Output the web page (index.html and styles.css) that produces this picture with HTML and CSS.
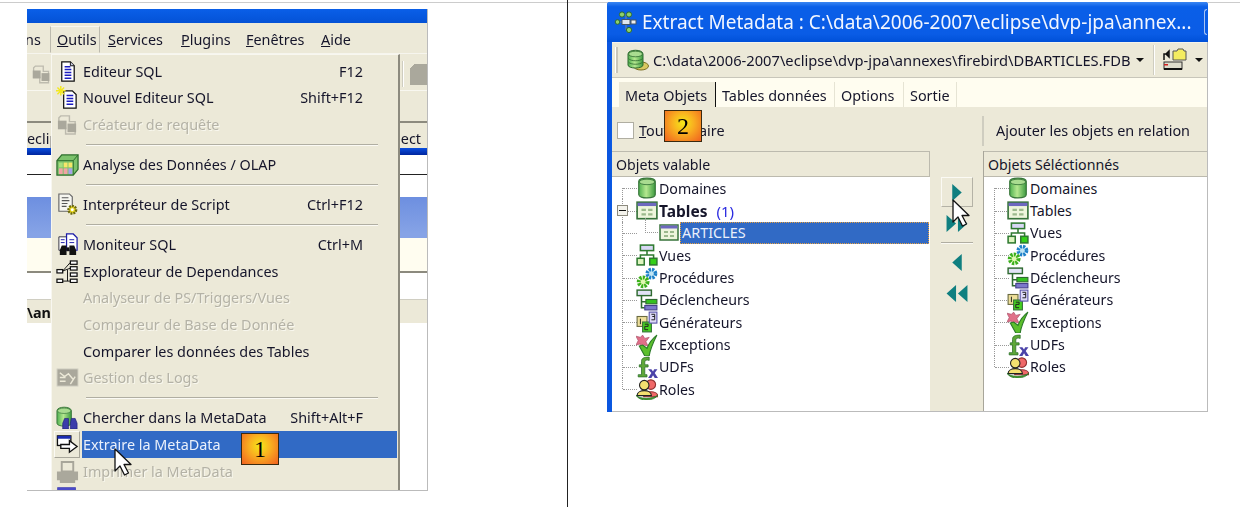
FILE: index.html
```html
<!DOCTYPE html>
<html lang="fr">
<head>
<meta charset="utf-8">
<title>Extraire la MetaData</title>
<link rel="stylesheet" href="styles.css">
</head>
<body>
<svg class="defs" aria-hidden="true">
  <defs>
    <linearGradient id="g-green" x1="0" x2="1" y1="0" y2="0"><stop offset="0" stop-color="#4fb050"/><stop offset=".45" stop-color="#b5e88f"/><stop offset="1" stop-color="#3c9a40"/></linearGradient>
    <symbol id="i-doc" viewBox="0 0 24 24"><path d="M6 2h9l4 4v16H6z" fill="#fff" stroke="#111" stroke-width="1.3"/><path d="M15 2v4h4" fill="#cfcfe8" stroke="#111"/><path d="M9 7h6M9 10h7M9 13h7M9 16h7M9 19h7" stroke="#1c1cc0" stroke-width="1.5"/></symbol>
    <symbol id="i-docnew" viewBox="0 0 24 24"><path d="M8 5h9l4 4v14H8z" fill="#fff" stroke="#111" stroke-width="1.3"/><path d="M11 10h7M11 13h7M11 16h7M11 19h7" stroke="#1c1cc0" stroke-width="1.5"/><path d="M5 0v10M0 5h10M1.500 1.500l7 7M8.500 1.500l-7 7" stroke="#f3e820" stroke-width="1.500"/></symbol>
    <symbol id="i-query" viewBox="0 0 24 24"><path d="M5 3h9v6h6v13H10v-6H3V5z" fill="#ece9d8" stroke="#bdbbae" stroke-width="1.500"/><rect x="2" y="8" width="9" height="9" fill="#aaa89c"/><rect x="12" y="11" width="9" height="9" fill="#aaa89c"/></symbol>
    <symbol id="i-olap" viewBox="0 0 24 24"><path d="M1 8l5-6h17v15l-5 6H1z" fill="#7cc26c" stroke="#2b6d2b" stroke-width="1.300"/><path d="M1 8h17v15M18 8l5-6" fill="none" stroke="#2b6d2b"/><rect x="3" y="10" width="4" height="5" fill="#a7e07f"/><rect x="8" y="10" width="4" height="5" fill="#f6e76a"/><rect x="13" y="10" width="4" height="5" fill="#f6e76a"/><rect x="3" y="16" width="4" height="6" fill="#f1a4a4"/><rect x="8" y="16" width="4" height="6" fill="#f1a4a4"/><rect x="13" y="16" width="4" height="6" fill="#a6a2e8"/></symbol>
    <symbol id="i-script" viewBox="0 0 24 24"><path d="M3 1h11l3 3v15H3z" fill="#f6f6f0" stroke="#666" stroke-width="1.200"/><path d="M6 5h7M6 8h8M6 11h6M6 14h5" stroke="#555" stroke-width="1.200"/><circle cx="17" cy="17.500" r="4" fill="#e6d420" stroke="#6c6a10" stroke-width="2.500" stroke-dasharray="2 1"/><circle cx="17" cy="17.500" r="1.500" fill="#fff"/></symbol>
    <symbol id="i-monitor" viewBox="0 0 24 24"><path d="M3 4h8v14H3z" fill="#fff" stroke="#334" /><path d="M11 1h7l4 4v13H11z" fill="#fff" stroke="#1c1ca8" stroke-width="1.300"/><path d="M5 7h4M5 10h4M14 7h5M14 10h5" stroke="#1c1ca8"/><path d="M6 13h5v10H4v-5zM14 13h5l2 5v5h-7z" fill="#111"/><rect x="11" y="15" width="3" height="4" fill="#111"/></symbol>
    <symbol id="i-deps" viewBox="0 0 24 24"><g fill="#fff" stroke="#111" stroke-width="1.300"><rect x="1" y="10" width="6" height="3.500"/><rect x="1" y="20" width="6" height="3.500"/><rect x="15" y="1" width="7" height="3.500"/><rect x="15" y="7" width="7" height="3.500"/><rect x="15" y="13.500" width="7" height="3.500"/><rect x="15" y="20" width="7" height="3.500"/></g><path d="M7 11.500l8-9M7 11.500l8-3M7 22h8M12 10v12" fill="none" stroke="#111"/></symbol>
    <symbol id="i-logs" viewBox="0 0 24 24"><rect x="1" y="3" width="22" height="18" fill="#aaa89c" stroke="#d8d6c8"/><path d="M4 7l5 4 4-3 5 6M4 12h6M4 16h6M15 19l5-8" fill="none" stroke="#ece9d8" stroke-width="1.500"/></symbol>
    <symbol id="i-find" viewBox="0 0 24 24"><path d="M1 5c0-5 15-5 15 0v13c0 4-15 4-15 0z" fill="url(#g-green)" stroke="#38763a"/><ellipse cx="8.500" cy="5" rx="7" ry="2.800" fill="#a9dc90" stroke="#38763a" stroke-width=".7"/><path d="M9 13h4v11H7v-6zM16 13h4l2 5v6h-7v-6z" fill="#3c3caa" stroke="#20207a" stroke-width=".7"/></symbol>
    <symbol id="i-extract" viewBox="0 0 24 24"><rect x="1.500" y="3" width="14" height="10" fill="#fff" stroke="#111" stroke-width="1.400"/><rect x="1.500" y="3" width="14" height="3" fill="#1c2cb0"/><path d="M5 12h9V8l8 6-8 6v-4H5z" fill="#fff" stroke="#111" stroke-width="1.400"/></symbol>
    <symbol id="i-print" viewBox="0 0 24 24"><path d="M6 2h12v10H6z" fill="#ece9d8" stroke="#a8a69a" stroke-width="2"/><path d="M1 12h22v9h-3v3H4v-3H1z" fill="#aaa89c"/></symbol>
    <symbol id="i-list" viewBox="0 0 24 24"><rect x="2" y="2" width="18" height="20" fill="#fff" stroke="#3a3ab0" stroke-width="1.400"/><rect x="2" y="2" width="18" height="4" fill="#4a4ac8"/></symbol>
    <symbol id="i-dom" viewBox="0 0 20 20"><path d="M2.500 4c0-4 15-4 15 0v12c0 4-15 4-15 0z" fill="url(#g-green)" stroke="#38763a" stroke-width="1.100"/><ellipse cx="10" cy="4.500" rx="7" ry="2.500" fill="#a9dc90" stroke="#38763a" stroke-width=".8"/></symbol>
    <symbol id="i-tab" viewBox="0 0 20 20"><rect x="1" y="2" width="18" height="15" fill="#eef5dc" stroke="#37733a" stroke-width="1.500"/><rect x="1.500" y="2.500" width="17" height="3" fill="#6d68bf"/><path d="M5 8h4v2H5zM5 12h4v2H5zM11 8h4v2h-4zM11 12h4v2h-4z" fill="#9cb98c"/></symbol>
    <symbol id="i-vue" viewBox="0 0 20 20"><rect x="4" y="1" width="12" height="5" fill="#d8d8f4" stroke="#2f7a30" stroke-width="1.400"/><path d="M10 6v4M4 14v-4h12v4" fill="none" stroke="#2f7a30" stroke-width="1.400"/><rect x="1" y="13" width="6.500" height="6" fill="#dff5c0" stroke="#2f7a30" stroke-width="1.400"/><rect x="12.500" y="13" width="6.500" height="6" fill="#34d018" stroke="#2f7a30" stroke-width="1.400"/></symbol>
    <symbol id="i-proc" viewBox="0 0 20 20"><circle cx="14" cy="6" r="3.800" fill="#bfe4f4" stroke="#1e80c8" stroke-width="3.200" stroke-dasharray="2 1"/><circle cx="6.500" cy="13.500" r="4" fill="#e0f8b0" stroke="#3cb01c" stroke-width="3.600" stroke-dasharray="2 1"/></symbol>
    <symbol id="i-trig" viewBox="0 0 20 20"><rect x="1" y="1" width="13" height="5" fill="#e2e2f6" stroke="#2f6a30" stroke-width="1.300"/><path d="M5 6v11h3M5 11.500h4" fill="none" stroke="#2f6a30" stroke-width="1.400"/><rect x="9" y="9.500" width="10" height="4" fill="#34c020" stroke="#2f6a30"/><rect x="8" y="15" width="11" height="4" fill="#7c78cc" stroke="#44408a"/></symbol>
    <symbol id="i-gen" viewBox="0 0 20 20"><rect x="1" y="5" width="9" height="9" fill="#eedf9a" stroke="#6a6a40"/><rect x="6" y="10" width="8" height="9" fill="#44d020" stroke="#37733a"/><rect x="12" y="1" width="7" height="10" fill="#dcd8f6" stroke="#5a54a8"/><path d="M4 7v5M8 12h3v2H8v3h3M14 3h3v2h-2 2v3h-3" fill="none" stroke="#222" stroke-width=".9"/></symbol>
    <symbol id="i-exc" viewBox="0 0 20 20"><path d="M0 2l4 1 2-2 2 3 4-1-3 4 2 4-4-1-2 2-1-3-4 1 2-4z" fill="#e07088" stroke="#a85068" stroke-width=".6"/><path d="M3 11l3-1 4 3c2-5 5-9 9-12-3 6-6 12-7 19H8z" fill="#5cc02c" stroke="#2b7a28" stroke-width="1"/></symbol>
    <symbol id="i-udf" viewBox="0 0 20 20"><path d="M3 8h2V5c0-3 2-4 7-4v3c-3-1-4 0-4 2v2h3v2H8v7h2v2H2v-2h3v-7H3z" fill="#5ea838" stroke="#2b6d2b" stroke-width=".7"/><path d="M11 12h3l1.500 2 1-2h3l-2.500 3.500L20 20h-3l-1.500-2.500L14 20h-3l3-4.500z" fill="#4a42a8"/></symbol>
    <symbol id="i-role" viewBox="0 0 20 20"><circle cx="13.500" cy="6" r="4.300" fill="#f06868" stroke="#903030"/><path d="M7 17c0-6 13-6 13 0z" fill="#f06868" stroke="#903030"/><circle cx="7.500" cy="6.500" r="4.300" fill="#f4e070" stroke="#222"/><path d="M1 16c0-6 13-6 13 0z" fill="#f4e070" stroke="#222"/><path d="M0 15.500c3 4 15 4 20 0-3 5.500-17 6.500-20 0z" fill="#44a828" stroke="#2b6d2b" stroke-width=".7"/></symbol>
    <symbol id="i-dbgold" viewBox="0 0 22 22"><ellipse cx="14" cy="17" rx="7.500" ry="4" fill="#d8c860" stroke="#7a6e20"/><path d="M1 5c0-5 15-5 15 0v11c0 4-15 4-15 0z" fill="url(#g-green)" stroke="#2e6a30"/><ellipse cx="8.500" cy="5" rx="7" ry="2.800" fill="#a9dc90" stroke="#2e6a30" stroke-width=".8"/><path d="M1.500 9.500c2 3 12 3 14 0M1.500 13c2 3 12 3 14 0" fill="none" stroke="#2e6a30" stroke-width=".8"/></symbol>
    <symbol id="i-open" viewBox="0 0 24 24"><path d="M10 3h4l1-2h5l1 2h2v9H10z" fill="#f4ec60" stroke="#555"/><path d="M1 12V6h5M3 6l3-3v6z" fill="none" stroke="#111" stroke-width="1.500"/><rect x="1" y="14" width="18" height="7" fill="#dedccc" stroke="#333"/><rect x="1" y="16" width="4" height="1.500" fill="#d02020"/><path d="M1 21h18" stroke="#111" stroke-width="2"/></symbol>
    <symbol id="i-app" viewBox="0 0 24 24"><path d="M12 4v16M4 12h16" stroke="#789" stroke-width="1"/><g fill="#8ed06c" stroke="#2e6a30"><circle cx="8" cy="4.500" r="2.600"/><circle cx="15" cy="4.500" r="2.600"/><circle cx="3.500" cy="12" r="2.300"/><circle cx="15" cy="20" r="2.600"/></g><rect x="8" y="9.500" width="8" height="5" fill="#dfe6f0" stroke="#456"/><rect x="17" y="10" width="5" height="4" fill="#eee" stroke="#456"/></symbol>
    <symbol id="i-cursor" viewBox="0 0 20 28"><path d="M1 1v22l5-5 4.500 9 4-2-4.500-8.500h7z" fill="#fff" stroke="#111" stroke-width="1.300" stroke-linejoin="round"/></symbol>
    <symbol id="a-r" viewBox="0 0 24 20"><path d="M7 1l10 9-10 9z" fill="#0f7f80"/></symbol>
    <symbol id="a-rr" viewBox="0 0 24 20"><path d="M1 1l10 9-10 9zM13 1l10 9-10 9z" fill="#0f7f80"/></symbol>
    <symbol id="a-l" viewBox="0 0 24 20"><path d="M17 1L7 10l10 9z" fill="#0f7f80"/></symbol>
    <symbol id="a-ll" viewBox="0 0 24 20"><path d="M11 1L1 10l10 9zM23 1L13 10l10 9z" fill="#0f7f80"/></symbol>
  </defs>
</svg>

<main class="page">
  <section class="col-left">
    <div class="shot">
      <div class="blur">
        <div class="xp-title"></div>
        <div class="menubar">
          <span class="mb-clip">ns</span>
          <span class="mb-open"><u>O</u>utils</span>
          <span class="mb-item m-s"><u>S</u>ervices</span>
          <span class="mb-item m-p"><u>P</u>lugins</span>
          <span class="mb-item m-f"><u>F</u>enêtres</span>
          <span class="mb-item m-a"><u>A</u>ide</span>
        </div>
        <div class="tb-a"><svg class="tb-ic"><use href="#i-query"/></svg><span class="tb-end"><span class="tb-sep"></span><span class="tb-gray-r"></span></span></div>
        <div class="tb-b"></div>
        <div class="line-g"></div>
        <div class="tabs-bg"><span>eclip</span><span>ect</span></div>
        <div class="st-blue"></div>
        <div class="st-white h19"></div>
        <div class="line-k"></div>
        <div class="st-white h22"></div>
        <div class="st-sel"></div>
        <div class="st-cream"></div>
        <div class="line-g"></div>
        <div class="st-white h26"></div>
        <div class="st-grid"><b>\an</b></div>
      </div>
      <div class="menu blur">
        <div class="mi"><span class="ic-c"><svg class="ic"><use href="#i-doc"/></svg></span><span class="lb"><span>Editeur SQL</span><span>F12</span></span></div>
        <div class="mi"><span class="ic-c"><svg class="ic"><use href="#i-docnew"/></svg></span><span class="lb"><span>Nouvel Editeur SQL</span><span>Shift+F12</span></span></div>
        <div class="mi off"><span class="ic-c"><svg class="ic"><use href="#i-query"/></svg></span><span class="lb"><span>Créateur de requête</span></span></div>
        <div class="sep"></div>
        <div class="mi"><span class="ic-c"><svg class="ic"><use href="#i-olap"/></svg></span><span class="lb"><span>Analyse des Données / OLAP</span></span></div>
        <div class="sep"></div>
        <div class="mi"><span class="ic-c"><svg class="ic"><use href="#i-script"/></svg></span><span class="lb"><span>Interpréteur de Script</span><span>Ctrl+F12</span></span></div>
        <div class="sep"></div>
        <div class="mi"><span class="ic-c"><svg class="ic"><use href="#i-monitor"/></svg></span><span class="lb"><span>Moniteur SQL</span><span>Ctrl+M</span></span></div>
        <div class="mi"><span class="ic-c"><svg class="ic"><use href="#i-deps"/></svg></span><span class="lb"><span>Explorateur de Dependances</span></span></div>
        <div class="mi off"><span class="ic-c"></span><span class="lb"><span>Analyseur de PS/Triggers/Vues</span></span></div>
        <div class="mi off"><span class="ic-c"></span><span class="lb"><span>Compareur de Base de Donnée</span></span></div>
        <div class="mi"><span class="ic-c"></span><span class="lb"><span>Comparer les données des Tables</span></span></div>
        <div class="mi off"><span class="ic-c"><svg class="ic"><use href="#i-logs"/></svg></span><span class="lb"><span>Gestion des Logs</span></span></div>
        <div class="sep"></div>
        <div class="mi"><span class="ic-c"><svg class="ic"><use href="#i-find"/></svg></span><span class="lb"><span>Chercher dans la MetaData</span><span>Shift+Alt+F</span></span></div>
        <div class="mi sel"><span class="ic-c"><svg class="ic"><use href="#i-extract"/></svg></span><span class="lb"><span>Extraire la MetaData</span></span></div>
        <div class="mi off"><span class="ic-c"><svg class="ic"><use href="#i-print"/></svg></span><span class="lb"><span>Imprimer la MetaData</span></span></div>
        <div class="mi"><span class="ic-c"><svg class="ic"><use href="#i-list"/></svg></span></div>
      </div>
      <div class="badge badge-1">1</div>
      <svg class="cursor cursor-1"><use href="#i-cursor"/></svg>
    </div>
  </section>

  <section class="win">
    <div class="blur win-in">
      <div class="w-title">
        <svg class="app"><use href="#i-app"/></svg>
        <span class="w-text">Extract Metadata : C:\data\2006-2007\eclipse\dvp-jpa\annex...</span>
        <span class="w-close"></span>
      </div>
      <div class="w-body">
        <div class="w-tool">
          <span class="grip"></span>
          <svg class="db"><use href="#i-dbgold"/></svg>
          <span class="path">C:\data\2006-2007\eclipse\dvp-jpa\annexes\firebird\DBARTICLES.FDB</span>
          <span class="caret"></span>
          <span class="vsep"></span>
          <svg class="open"><use href="#i-open"/></svg>
          <span class="caret"></span>
        </div>
        <div class="w-tabs">
          <span class="tab active">Meta Objets</span>
          <span class="tab t2">Tables données</span>
          <span class="tab t3">Options</span>
          <span class="tab t4">Sortie</span>
        </div>
        <div class="w-opts">
          <div class="opt-l"><span class="check"></span><span><u>T</u>out Extraire</span></div>
          <div class="opt-r">Ajouter les objets en relation</div>
        </div>
        <div class="panes">
          <div class="pane pane-l">
            <div class="p-head">Objets valable</div>
            <div class="tree">
              <div class="row first"><i class="conn"></i><svg class="ti"><use href="#i-dom"/></svg><span>Domaines</span></div>
              <div class="row"><i class="conn"></i><span class="exp"></span><svg class="ti"><use href="#i-tab"/></svg><span><b>Tables</b><span class="count">(1)</span></span></div>
              <div class="row sub"><i class="conn"></i><i class="conn2"></i><svg class="ti"><use href="#i-tab"/></svg><span class="hl">ARTICLES</span></div>
              <div class="row"><i class="conn"></i><svg class="ti"><use href="#i-vue"/></svg><span>Vues</span></div>
              <div class="row"><i class="conn"></i><svg class="ti"><use href="#i-proc"/></svg><span>Procédures</span></div>
              <div class="row"><i class="conn"></i><svg class="ti"><use href="#i-trig"/></svg><span>Déclencheurs</span></div>
              <div class="row"><i class="conn"></i><svg class="ti"><use href="#i-gen"/></svg><span>Générateurs</span></div>
              <div class="row"><i class="conn"></i><svg class="ti"><use href="#i-exc"/></svg><span>Exceptions</span></div>
              <div class="row"><i class="conn"></i><svg class="ti"><use href="#i-udf"/></svg><span>UDFs</span></div>
              <div class="row last"><i class="conn"></i><svg class="ti"><use href="#i-role"/></svg><span>Roles</span></div>
            </div>
          </div>
          <div class="mid">
            <span class="mbtn raised"><svg class="arr"><use href="#a-r"/></svg></span>
            <span class="mbtn b2"><svg class="arr"><use href="#a-rr"/></svg></span>
            <span class="msep"></span>
            <span class="mbtn b3"><svg class="arr"><use href="#a-l"/></svg></span>
            <span class="mbtn"><svg class="arr"><use href="#a-ll"/></svg></span>
          </div>
          <div class="pane pane-r">
            <div class="p-head">Objets Séléctionnés</div>
            <div class="tree">
              <div class="row first"><i class="conn"></i><svg class="ti"><use href="#i-dom"/></svg><span>Domaines</span></div>
              <div class="row"><i class="conn"></i><svg class="ti"><use href="#i-tab"/></svg><span>Tables</span></div>
              <div class="row"><i class="conn"></i><svg class="ti"><use href="#i-vue"/></svg><span>Vues</span></div>
              <div class="row"><i class="conn"></i><svg class="ti"><use href="#i-proc"/></svg><span>Procédures</span></div>
              <div class="row"><i class="conn"></i><svg class="ti"><use href="#i-trig"/></svg><span>Déclencheurs</span></div>
              <div class="row"><i class="conn"></i><svg class="ti"><use href="#i-gen"/></svg><span>Générateurs</span></div>
              <div class="row"><i class="conn"></i><svg class="ti"><use href="#i-exc"/></svg><span>Exceptions</span></div>
              <div class="row"><i class="conn"></i><svg class="ti"><use href="#i-udf"/></svg><span>UDFs</span></div>
              <div class="row last"><i class="conn"></i><svg class="ti"><use href="#i-role"/></svg><span>Roles</span></div>
            </div>
          </div>
        </div>
      </div>
    </div>
    <div class="badge badge-2">2</div>
    <svg class="cursor cursor-2"><use href="#i-cursor"/></svg>
  </section>
</main>
</body>
</html>
```

FILE: styles.css
```css
* { box-sizing: border-box; }
html, body { margin: 0; padding: 0; background: #fff; }
body { width: 1240px; height: 507px; overflow: hidden; font-family: "Noto Sans", "Open Sans", sans-serif; font-size: 14.400px; color: #15152a; }
.defs { width: 0; height: 0; position: absolute; }
.page { display: flex; height: 507px; background: linear-gradient(#ccc, #ccc) 0 2px / 100% 1px no-repeat #fff; }
.blur { filter: blur(.42px); }

.col-left { width: 568px; height: 507px; padding: 9px 0 0 27px; border-right: 1px solid #222; flex: none; }
.shot { position: relative; width: 401px; height: 482px; border-right: 1px solid #bbb; border-bottom: 1px solid #bbb; overflow: hidden; background: #fff; }

.xp-title { height: 14px; background: linear-gradient(#0a5fe8, #0452d6); }
.menubar { height: 30px; padding-top: 2px; background: #ece9d8; display: flex; align-items: center; position: relative; white-space: nowrap; }
.mb-clip { width: 23px; text-indent: -2px; overflow: hidden; flex: none; }
.mb-open { height: 27px; line-height: 25px; width: 50px; padding-left: 6px; flex: none; border: 1px solid; border-color: #f8f7f0 #bcbaae #ece9d8 #bcbaae; align-self: flex-end; }
.mb-item { flex: none; }
.m-s { width: 73px; margin-left: 8px; }
.m-p { width: 65px; }
.m-f { width: 75px; }
.tb-a { height: 37px; background: #ece9d8; display: flex; justify-content: space-between; align-items: center; padding-top: 4px; border-top: 1px solid #f6f5ee; }
.tb-ic { width: 21px; height: 24px; margin-left: 4px; }
.tb-end { display: flex; align-items: center; gap: 6px; }
.tb-sep { width: 2px; height: 26px; background: #cfcdc0; border-right: 1px solid #fff; }
.tb-gray-r { width: 17px; height: 21px; background: linear-gradient(135deg, transparent 3px, #aaa89c 3px); }
.tb-b { height: 31px; background: #ece9d8; border-top: 1px solid #f8f7f0; }
.line-g { height: 2px; background: #8c8a7e; }
.tabs-bg { height: 25px; padding: 5px 6px 0 0; background: #ece9d8; display: flex; justify-content: space-between; align-items: center; overflow: hidden; }
.st-blue { height: 7px; background: linear-gradient(#0a4fe0, #00259e); }
.st-white { background: #fff; }
.h19 { height: 19px; }
.h22 { height: 22px; }
.h26 { height: 26px; }
.line-k { height: 1px; background: #222; }
.st-sel { height: 41px; background: linear-gradient(#6d8fe0, #86a3e6 90%); }
.st-cream { height: 33px; background: #fffdf0; }
.st-grid { height: 24px; background: #ece9d8; border-top: 1px solid #d0cec2; line-height: 26px; overflow: hidden; }
.st-grid b { display: block; color: #111; }

.menu { position: absolute; left: 24px; top: 45px; width: 349px; bottom: 0; background: #ece9d8; border-left: 1px solid #f8f7f0; border-top: 1px solid #f8f7f0; border-right: 2px solid #8c8a7e; padding: 3px 1px 0 2px; overflow: hidden; }
.mi { height: 26.600px; display: flex; align-items: stretch; }
.ic-c { width: 26px; flex: none; margin-right: 2px; display: flex; align-items: center; justify-content: center; }
.ic { width: 23px; height: 23px; display: block; }
.lb { flex: 1; display: flex; justify-content: space-between; align-items: center; padding: 0 34px 0 1px; color: #15152a; white-space: nowrap; }
.off .lb { color: #b4b2a6; text-shadow: 1px 1px 0 #f8f7ee; }
.sep { height: 13.500px; display: flex; align-items: center; padding: 0 19px 0 32px; }
.sep::before { content: ""; flex: 1; height: 2px; background: linear-gradient(#b0aea2 50%, #fbfaf4 50%); }
.sel .lb { background: #316ac5; color: #eaf0fb; }
.sel .ic-c { background: #ece9d8; border: 1px solid; border-color: #fbfaf4 #a8a69a #a8a69a #fbfaf4; }

.badge { position: absolute; width: 38px; height: 32px; border: 1px solid #3a2a10; background: radial-gradient(circle at 50% 40%, #f4e818 0%, #f9b020 42%, #f06020 100%); font-family: "Liberation Serif", serif; font-size: 24px; line-height: 30px; text-align: center; color: #000; }
.badge-1 { left: 214px; top: 424px; }
.badge-2 { left: 57px; top: 108px; }
.cursor { position: absolute; width: 20px; height: 28px; }
.cursor-1 { left: 87px; top: 439px; }
.cursor-2 { left: 345px; top: 197px; }

.win { position: relative; width: 601px; height: 410px; margin: 2px 0 0 39px; flex: none; }
.win-in { height: 100%; display: flex; flex-direction: column; background: linear-gradient(#0a5ce8, #0a5ae0); border-left: 4px solid #0b56e0; border-radius: 3px 3px 0 0; }
.w-title { height: 40px; flex: none; display: flex; align-items: center; background: linear-gradient(#3a86f2 0, #0a5fe8 12%, #0a5ce6 80%, #0050d8 100%); margin-left: -4px; padding-left: 7px; border-radius: 3px 3px 0 0; }
.app { width: 24px; height: 24px; flex: none; }
.w-text { margin-left: 4px; color: #f2f6ff; font-size: 19px; white-space: nowrap; }
.w-close { width: 3px; height: 26px; margin-left: auto; margin-right: 1px; border: 1px solid #a8c4f4; border-right: 0; border-radius: 3px 0 0 3px; }
.w-body { flex: 1; background: #ece9d8; margin-left: 1px; border-right: 1px solid #bbb; border-bottom: 1px solid #bbb; display: flex; flex-direction: column; min-height: 0; }
.w-tool { height: 36px; flex: none; display: flex; align-items: center; padding-left: 3px; border-top: 1px solid #f4f3ec; border-bottom: 1px solid #c8c6ba; }
.grip { width: 3px; height: 26px; background: #c8c6ba; border-left: 1px solid #fff; margin-right: 9px; }
.db { width: 22px; height: 22px; }
.path { margin-left: 4px; white-space: nowrap; width: 483px; font-size: 14.700px; }
.caret { width: 0; height: 0; border: 4px solid transparent; border-top-color: #111; border-bottom: 0; }
.vsep { width: 2px; height: 30px; margin-left: 9px; background: #cfcdc0; border-right: 1px solid #fff; }
.open { width: 24px; height: 24px; margin: 0 8px; }
.w-tabs { height: 29px; flex: none; background: #fffdf0; display: flex; align-items: flex-end; padding-left: 7px; }
.tab { height: 25px; line-height: 28px; padding: 0 5px 0 6px; border-right: 1px solid #e6e4d4; white-space: nowrap; }
.active { width: 97px; background: #ece9d8; border-right: 1.500px solid #111; }
.t2 { width: 119px; }
.t3 { width: 69px; }
.t4 { width: 53px; }
.w-opts { height: 44px; padding-top: 3px; flex: none; display: flex; align-items: center; }
.opt-l { width: 370px; display: flex; align-items: center; padding-left: 5px; gap: 5px; }
.check { width: 17px; height: 17px; background: #fff; border: 1px solid #b0aea2; }
.opt-r { height: 30px; line-height: 30px; border-left: 2px solid #cfcdc0; padding-left: 12px; white-space: nowrap; }
.panes { flex: 1; display: flex; min-height: 0; }
.pane { display: flex; flex-direction: column; background: #fff; }
.pane-l { width: 318px; }
.pane-r { flex: 1; border-left: 1px solid #a8a69a; }
.p-head { height: 26px; line-height: 25px; background: #ece9d8; padding-left: 4px; border-top: 1px solid #bcbaae; border-bottom: 1px solid #bcbaae; border-right: 1px solid #bcbaae; font-size: 14.200px; }
.pane-r .p-head { border-right: 0; }
.tree { flex: 1; font-size: 14.200px; }
.row { position: relative; height: 22.350px; display: flex; align-items: center; padding-left: 25px; white-space: nowrap; }
.pane-r .row { padding-left: 24px; }
.conn { position: absolute; left: 10px; top: 0; bottom: 0; width: 15px; border-left: 1px dotted #999; }
.conn::after { content: ""; position: absolute; left: 0; right: 0; top: 50%; border-top: 1px dotted #999; }
.first .conn { top: 50%; }
.first .conn::after { top: 0; }
.last .conn { bottom: 50%; }
.last .conn::after { top: 100%; }
.ti { width: 22px; height: 22px; flex: none; margin: 0 1px 0 -1px; position: relative; }
.exp { position: absolute; left: 5px; top: 6px; width: 11px; height: 11px; background: linear-gradient(#111, #111) center / 7px 1px no-repeat #f4f3ec; border: 1px solid #8c8a7e; }
.count { color: #2a2ae0; margin-left: 9px; font-size: 15px; }
.row b { font-weight: 700; font-size: 15.500px; }
.sub { padding-left: 46px; }
.conn2 { position: absolute; left: 33px; top: -4px; height: 15px; width: 13px; border-left: 1px dotted #999; border-bottom: 1px dotted #999; }
.sub .ti { width: 20px; height: 20px; margin: 0 1px; }
.hl { flex: 1; height: 22px; line-height: 20px; margin-right: 1px; background: #316ac5; color: #eaf0fb; padding-left: 1px; border: 1px dotted #e6a040; font-size: 14.400px; }
.mid { width: 53px; padding-top: 26px; flex: none; display: flex; flex-direction: column; align-items: center; }
.mbtn { width: 32px; height: 30px; flex: none; display: flex; align-items: center; justify-content: center; }
.raised { border: 1px solid; border-color: #fbfaf4 #b4b2a6 #b4b2a6 #fbfaf4; }
.b2 { height: 33px; }
.msep { width: 32px; height: 2px; flex: none; margin: 2px 0 6px; background: linear-gradient(#b0aea2 50%, #fbfaf4 50%); }
.b3 { height: 24px; margin-bottom: 4px; }
.arr { width: 24px; height: 19px; }
```
